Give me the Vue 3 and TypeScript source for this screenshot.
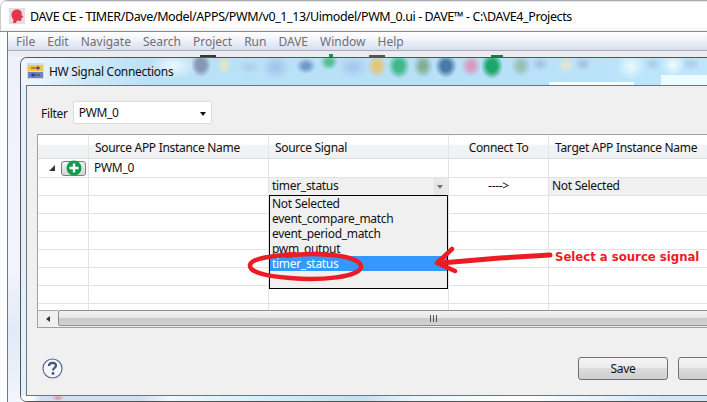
<template>
  <div class="screen">
    <header class="titlebar">
      <svg class="app-icon" width="16" height="16" viewBox="0 0 16 16">
        <rect width="16" height="16" fill="#e6dbe0" />
        <path d="M2.500 7 C2.500 3 6 1 9 1.500 C12 2 13.500 5 12.500 7 L14.500 9 L12.500 10 L12 13 L8 12.500 L7 15 L4 15 L4.500 11.500 C3.500 10.500 2.500 9 2.500 7Z" fill="#e0364a" />
      </svg>
      <span class="title-text">DAVE CE - TIMER/Dave/Model/APPS/PWM/v0_1_13/Uimodel/PWM_0.ui - DAVE™ - C:\DAVE4_Projects</span>
    </header>

    <div class="workbench">
      <nav class="menubar">
        <span v-for="m in menus" :key="m">{{ m }}</span>
      </nav>
      <div class="toolstrip"></div>
      <div class="sidestrip"></div>
    </div>

    <section class="dialog">
      <div class="dialog-title">
        <svg class="dialog-icon" width="17" height="16" viewBox="0 0 17 16">
          <rect width="17" height="16" fill="#d5dbe8" />
          <rect x="1" y="2" width="15" height="6" fill="#f7c63f" />
          <rect x="1" y="9" width="15" height="6" fill="#6e84bd" />
          <path d="M4 5H12M10 3.500L12.500 5L10 6.500" fill="none" stroke="#5b3f86" stroke-width="1.200" />
          <path d="M13 12H5M7 10.500L4.500 12L7 13.500" fill="none" stroke="#33406e" stroke-width="1.200" />
        </svg>
        <span>HW Signal Connections</span>
      </div>

      <div class="dialog-body">
        <div class="filter">
          <label>Filter</label>
          <div class="filter-combo">
            <span>PWM_0</span>
            <i class="combo-arrow"></i>
          </div>
        </div>

        <div class="table">
          <div class="row head">
            <div class="cell"></div>
            <div class="cell">Source APP Instance Name</div>
            <div class="cell">Source Signal</div>
            <div class="cell center">Connect To</div>
            <div class="cell">Target APP Instance Name</div>
          </div>
          <div class="row first">
            <div class="cell tree">
              <i class="twist"></i>
              <button class="add-btn" type="button">
                <svg width="16" height="16" viewBox="0 0 16 16">
                  <circle cx="8" cy="8" r="7.500" fill="#0f9d4a" />
                  <path d="M8 3.500V12.500M3.500 8H12.500" stroke="#fff" stroke-width="2.400" />
                </svg>
              </button>
            </div>
            <div class="cell name">PWM_0</div>
            <div class="cell"></div>
            <div class="cell"></div>
            <div class="cell"></div>
          </div>
          <div class="row">
            <div class="cell"></div>
            <div class="cell"></div>
            <div class="cell picked">
              <span>timer_status</span>
              <i class="cell-arrow"></i>
            </div>
            <div class="cell center">----&gt;</div>
            <div class="cell picked target">Not Selected</div>
          </div>
          <div v-for="n in 6" :key="n" class="row">
            <div v-for="c in 5" :key="c" class="cell"></div>
          </div>
          <div class="row stub">
            <div v-for="c in 5" :key="c" class="cell"></div>
          </div>

          <div class="scrollbar">
            <button class="scroll-left" type="button"><i></i></button>
            <div class="scroll-thumb"><span class="grip"></span></div>
          </div>

          <ul class="popup">
            <li v-for="s in signals" :key="s" :class="{ active: s === 'timer_status' }">{{ s }}</li>
          </ul>
        </div>

        <footer class="actions">
          <svg class="help" width="21" height="21" viewBox="0 0 21 21">
            <circle cx="10.500" cy="10.500" r="9.500" fill="#f6f7fa" stroke="#5d6f92" stroke-width="1.200" />
            <path d="M7 8 C7 5.600 8.800 4.800 10.500 4.800 C12.400 4.800 14 5.900 14 7.800 C14 10 11 10 11 12.500" fill="none" stroke="#44557a" stroke-width="2.200" />
            <circle cx="11" cy="15.500" r="1.400" fill="#44557a" />
          </svg>
          <button class="btn" type="button">Save</button>
          <button class="btn" type="button"></button>
        </footer>
      </div>
      <div class="dialog-foot"></div>
    </section>

    <svg class="markup" width="707" height="402" viewBox="0 0 707 402">
      <path d="M285 256 C320 251 362 256 361 267 C360 277 320 281 290 278 C265 276 249 272 250 265 C251 259 268 256 296 254" fill="none" stroke="#ed1c24" stroke-width="4.500" />
      <path d="M550 255 L500 258 L441 263" fill="none" stroke="#ed1c24" stroke-width="5" stroke-linecap="round" />
      <path d="M452 249 L437 263 L455 271" fill="none" stroke="#ed1c24" stroke-width="4.500" stroke-linecap="round" stroke-linejoin="round" />
    </svg>
    <span class="callout">Select a source signal</span>
  </div>
</template>

<script setup lang="ts">
const menus: string[] = ['File', 'Edit', 'Navigate', 'Search', 'Project', 'Run', 'DAVE', 'Window', 'Help']
const signals: string[] = ['Not Selected', 'event_compare_match', 'event_period_match', 'pwm_output', 'timer_status']
</script>

<style>
html, body { margin: 0; background: #fff; }
</style>

<style scoped>
* { box-sizing: border-box; }

.screen {
  position: relative; width: 707px; height: 402px; overflow: hidden;
  background: #fbfcfe; color: #111;
  font: 12px "Noto Sans", "Open Sans", sans-serif;
  letter-spacing: -0.3px;
}

.titlebar {
  display: flex; align-items: center; height: 32px; padding: 1px 0 0 9px;
  background: linear-gradient(#8f9296, #fff 2px, #fff 26px, #f3f4f6);
  border-bottom: 1px solid #8a8a8a;
  border-top-left-radius: 7px;
  box-shadow: inset 1px 0 0 #c9cacc;
}
.app-icon { flex: none; }
.title-text { margin-left: 5px; font-size: 12.500px; letter-spacing: -0.4px; white-space: nowrap; color: #000; }

.workbench { height: 370px; margin-left: 7px; border-left: 1px solid #777; background: #eef1fb; }
.menubar {
  display: flex; gap: 12px; height: 19px; padding: 0 0 0 8px; align-items: center;
  background: linear-gradient(#fff, #f6f7fb 30%, #d9dff0);
  border-bottom: 1px solid #a9abb5;
  color: #6f6f76;
  letter-spacing: 0;
}
.toolstrip {
  height: 6px;
  background:
    linear-gradient(#35383c, #35383c) 192px 4px / 16px 2px no-repeat,
    linear-gradient(#1f8f5e, #1f8f5e) 321px 3px / 4px 3px no-repeat,
    linear-gradient(#555, #555) 361px 4px / 16px 2px no-repeat,
    linear-gradient(#1c7a52, #1c7a52) 483px 4px / 12px 2px no-repeat,
    #ecedf2;
}
.sidestrip {
  height: 345px;
  background: linear-gradient(#eef1fa, #f3f5fd 60%, #e3e9f7 80%, #f2f5fc);
}

.dialog {
  position: absolute; left: 20px; top: 57px; width: 720px; height: 345px;
  display: flex; flex-direction: column;
  border: 1px solid #545454; border-right: 0; border-radius: 7px 0 0 7px;
  background: #dff1fb;
}
.dialog-title {
  display: flex; align-items: center; gap: 5px; height: 27px; padding: 0 0 1px 6px;
  color: #111;
  border-radius: 6px 0 0 0;
  background:
    radial-gradient(ellipse 10px 12px at 180px 7px, #8698b3 45%, transparent),
    radial-gradient(ellipse 8px 9px at 203px 7px, #e8e8b8, transparent),
    radial-gradient(ellipse 11px 7px at 228px 9px, #b2cde9, transparent),
    radial-gradient(ellipse 14px 12px at 255px 9px, #a4c6ee 20%, transparent),
    radial-gradient(ellipse 10px 8px at 285px 8px, #6f9bc9 30%, transparent),
    radial-gradient(ellipse 9px 8px at 308px 4px, #56bd95 30%, transparent),
    radial-gradient(ellipse 15px 11px at 332px 9px, #a9c9ee 20%, transparent),
    radial-gradient(ellipse 10px 12px at 356px 8px, #e2c67c 30%, transparent),
    radial-gradient(ellipse 11px 13px at 378px 8px, #42b98a 40%, transparent),
    radial-gradient(ellipse 10px 12px at 402px 8px, #86ad98 30%, transparent),
    radial-gradient(ellipse 11px 12px at 425px 8px, #477aa9 40%, transparent),
    radial-gradient(ellipse 10px 11px at 450px 8px, #d69cbf 30%, transparent),
    radial-gradient(ellipse 11px 13px at 471px 8px, #1ca66c 45%, transparent),
    radial-gradient(ellipse 10px 11px at 500px 8px, #99c0b6 30%, transparent),
    radial-gradient(ellipse 9px 7px at 519px 6px, #a2bede, transparent),
    radial-gradient(ellipse 9px 9px at 545px 7px, #eae6c8, transparent),
    radial-gradient(ellipse 9px 7px at 562px 6px, #a3bde0, transparent),
    radial-gradient(ellipse 14px 14px at 610px 8px, #eafaff, transparent),
    radial-gradient(ellipse 9px 7px at 632px 6px, #afc9ea, transparent),
    radial-gradient(ellipse 12px 12px at 652px 7px, #f0fcff, transparent),
    radial-gradient(ellipse 10px 7px at 670px 6px, #afc9ea, transparent),
    linear-gradient(#f4feff, #f4feff) 528px 24px / 85px 3px no-repeat,
    linear-gradient(#ecfdff, #ecfdff) 640px 17px / 70px 10px no-repeat,
    radial-gradient(ellipse 24px 14px at 152px 8px, #eef9ff, transparent),
    linear-gradient(90deg, #f0f7fd 0, #d0eafa 60px, #b9e0f7 130px, #b7e1f8 500px, #c0e7fb);
}
.dialog-icon { flex: none; }

.dialog-body {
  flex: 1; min-height: 0; margin-left: 5px; padding: 15px 0 0 10px;
  display: flex; flex-direction: column;
  background: #f0f0f0;
  border: 1px solid #6f7478; border-right: 0;
}
.dialog-foot {
  height: 5px; flex: none; border-radius: 0 0 0 6px;
  background:
    radial-gradient(ellipse 6px 3px at 37px 2px, #d98a96, transparent),
    linear-gradient(90deg, #fff 10px, #cfe0f4 20px, #cfe0f4 120px, #eef7fc 150px, #d4f1fb 230px, #c3dff3 340px, #e6f6fb 390px, #fff 500px, #cfe8f8 640px);
}

.filter { display: flex; align-items: center; gap: 5px; height: 23px; padding-left: 4px; }
.filter label { padding-top: 1px; }
.filter-combo {
  display: flex; align-items: center; justify-content: space-between;
  width: 139px; height: 23px; padding: 0 5px 1px 5px;
  background: #fff; border: 1px solid #dcdcdc; border-radius: 2px;
}
.combo-arrow { width: 0; height: 0; margin-top: 3px; border: 3.500px solid transparent; border-top: 4px solid #111; border-bottom: 0; }

.table {
  position: relative; flex: none; width: 700px; height: 194px; margin-top: 10px;
  background: #fff; border: 1px solid #a0a0a0; border-right: 0;
  overflow: hidden;
}
.row {
  display: grid; grid-template-columns: 51px 180px 180px 100px 1fr; height: 18px;
  border-bottom: 1px solid #e3e3e3;
}
.cell { display: flex; align-items: center; padding: 0 0 1px 4px; border-right: 1px solid #e3e3e3; white-space: nowrap; line-height: 16px; }
.cell:last-child { border-right: 0; }
.center { justify-content: center; padding-left: 0; }
.head { height: 24px; border-bottom-color: #dcdcdc; background: linear-gradient(#fff 40%, #f2f3f4 45%, #f0f1f2); }
.head .cell { padding: 2px 0 0 6px; border-right-color: #e4e6e8; }
.head .cell.center { padding-left: 0; }
.first { height: 19px; }
.stub { height: 6px; border-bottom: 0; }

.tree { gap: 6px; padding: 0 0 0 11px; }
.twist { width: 0; height: 0; border-style: solid; border-width: 0 0 6px 6px; border-color: transparent transparent #333 transparent; }
.add-btn {
  position: relative; display: flex; align-items: center; justify-content: center;
  width: 25px; height: 15px; padding: 0;
  background: linear-gradient(#f0f0f0, #d6d6d6); border: 1px solid #7f7f7f; border-radius: 3px;
}
.add-btn svg { display: block; flex: none; margin: -1px 0; }
.name { padding-left: 5px; }
.picked { justify-content: space-between; padding: 0 0 1px 3px; background: #f0f0f0; }
.target { padding-left: 3px; }
.cell-arrow {
  position: relative; width: 14px; height: 17px; flex: none; margin-bottom: -1px;
  background: linear-gradient(90deg, #e4e4e4, #ececec);
}
.cell-arrow::after {
  content: ""; position: absolute; left: 3px; top: 7px;
  border: 3.500px solid transparent; border-top: 4px solid #777; border-bottom: 0;
}

.scrollbar { display: flex; height: 17px; background: #f0f0f0; overflow: hidden; }
.scroll-left {
  display: flex; align-items: center; justify-content: center; flex: none;
  width: 20px; height: 16px; padding: 0; background: #f0f0f0; border: 0; border-top: 1px solid #a8a8a8;
}
.scroll-left i { border: 3.500px solid transparent; border-right: 4px solid #333; border-left: 0; }
.scroll-thumb {
  display: flex; align-items: center; justify-content: center; flex: none;
  width: 750px; height: 16px;
  background: linear-gradient(#f2f2f2, #e6e6e6 48%, #c9c9c9 52%, #d2d2d2);
  border: 1px solid #8e8f8f; border-radius: 2px;
}
.grip {
  width: 7px; height: 7px;
  background: repeating-linear-gradient(90deg, #555 0 1px, transparent 1px 3px);
}

.popup {
  position: absolute; left: 231px; top: 60px; width: 179px; height: 94px;
  margin: 0; padding: 0; list-style: none;
  background: #f0f0f0; border: 1px solid #000;
}
.popup li { height: 15px; padding-left: 2px; line-height: 15px; white-space: nowrap; }
.popup li.active { background: #3399ff; color: #fff; }

.actions { display: flex; align-items: center; gap: 10px; padding: 29px 0 0 5px; }
.help { margin-right: 505px; flex: none; }
.btn {
  flex: none; width: 90px; height: 23px; padding: 0 0 1px;
  font: inherit; letter-spacing: inherit; color: #111;
  background: linear-gradient(#f4f4f4, #ebebeb 46%, #dcdcdc 50%, #cfcfcf);
  border: 1px solid #707070; border-radius: 3px;
}

.markup { position: absolute; left: 0; top: 0; pointer-events: none; }
.callout {
  position: absolute; left: 555px; top: 249px;
  font: bold 11.700px "DejaVu Sans", sans-serif; line-height: 16px; letter-spacing: 0;
  color: #ed1c24; white-space: nowrap;
}
</style>
